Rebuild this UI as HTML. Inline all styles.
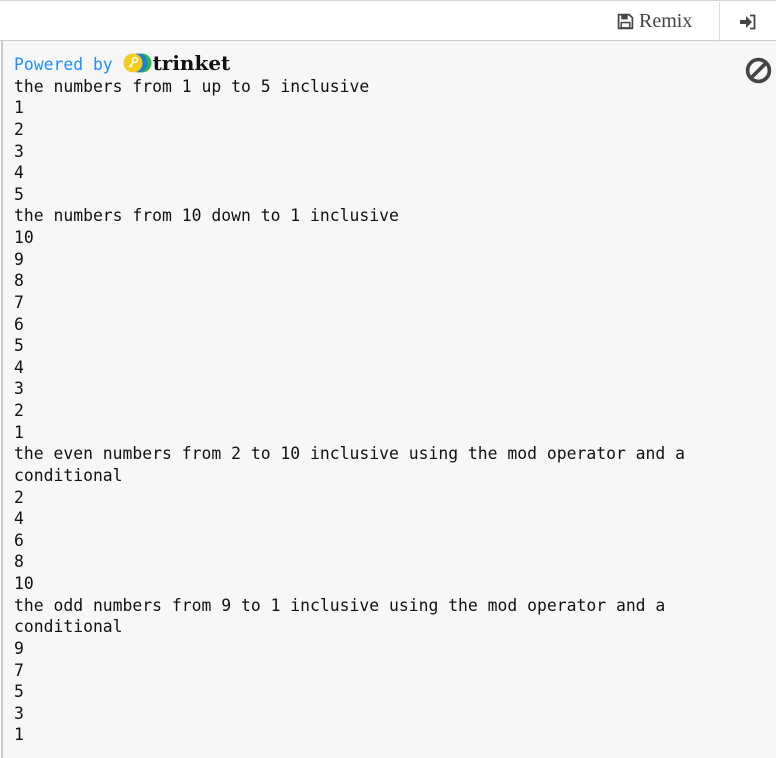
<!DOCTYPE html>
<html><head><style>
html,body{margin:0;padding:0;width:776px;height:758px;overflow:hidden;background:#fff;}
.top{position:absolute;left:0;top:0;width:776px;height:41px;border-top:1px solid #d6d6d6;border-bottom:1px solid #ccc;box-sizing:border-box;background:#fff;}
.remix{position:absolute;top:9px;font:20px "Liberation Serif",serif;color:#444;}
.div{position:absolute;left:719px;top:1px;width:1px;height:40px;background:#ddd;}
.out{position:absolute;left:1px;top:41px;width:775px;height:717px;background:#f7f7f7;border-left:2px solid #c8c8c8;box-sizing:border-box;}
pre{margin:0;position:absolute;left:11px;top:10px;font:16.4px "DejaVu Sans Mono","Liberation Mono",monospace;line-height:21.63px;color:#111;}
.pb{color:#1e90ff;}
.tk{font:bold 20px "DejaVu Serif","Liberation Serif",serif;color:#111;}
</style></head><body>
<div class="top">
<svg style="position:absolute;left:617px;top:12px" width="17" height="17" viewBox="0 0 16 16"><path d="M1.5 1.5h10l3 3v10h-13z" fill="none" stroke="#444" stroke-width="1.6"/><rect x="4" y="2" width="6" height="4" fill="#444"/><rect x="4" y="9" width="8" height="5" fill="none" stroke="#444" stroke-width="1.4"/></svg>
<span class="remix" style="left:639px">Remix</span>
<div class="div"></div>
<svg style="position:absolute;left:739px;top:13px" width="18" height="16" viewBox="0 0 18 16"><path d="M1 6h6V2l6 6-6 6v-4H1z" fill="#444"/><path d="M11 1.5h4.5v13H11" fill="none" stroke="#444" stroke-width="1.8"/></svg>
</div>
<div class="out">
<svg style="position:absolute;left:742px;top:16px" width="27" height="27" viewBox="0 0 26 26"><circle cx="13" cy="13" r="10.5" fill="none" stroke="#444" stroke-width="3.5"/><path d="M6 20L20 6" stroke="#444" stroke-width="3.5"/></svg>
<pre><span class="pb">Powered by </span><svg width="30" height="20" viewBox="0 0 30 20" style="vertical-align:-3px"><circle cx="19" cy="10" r="9.5" fill="#2ab84a"/><circle cx="15" cy="10" r="9.5" fill="#1e7fd8"/><circle cx="10" cy="10" r="9.5" fill="#f4cc1b"/><circle cx="12" cy="7" r="2.5" fill="none" stroke="#fff" stroke-width="1.5"/><path d="M10.5 9L6 14M7.5 12.5l1.5 1.5" stroke="#fff" stroke-width="1.5"/></svg><span class="tk">trinket</span>
the numbers from 1 up to 5 inclusive
1
2
3
4
5
the numbers from 10 down to 1 inclusive
10
9
8
7
6
5
4
3
2
1
the even numbers from 2 to 10 inclusive using the mod operator and a
conditional
2
4
6
8
10
the odd numbers from 9 to 1 inclusive using the mod operator and a
conditional
9
7
5
3
1</pre>
</div>
</body></html>
